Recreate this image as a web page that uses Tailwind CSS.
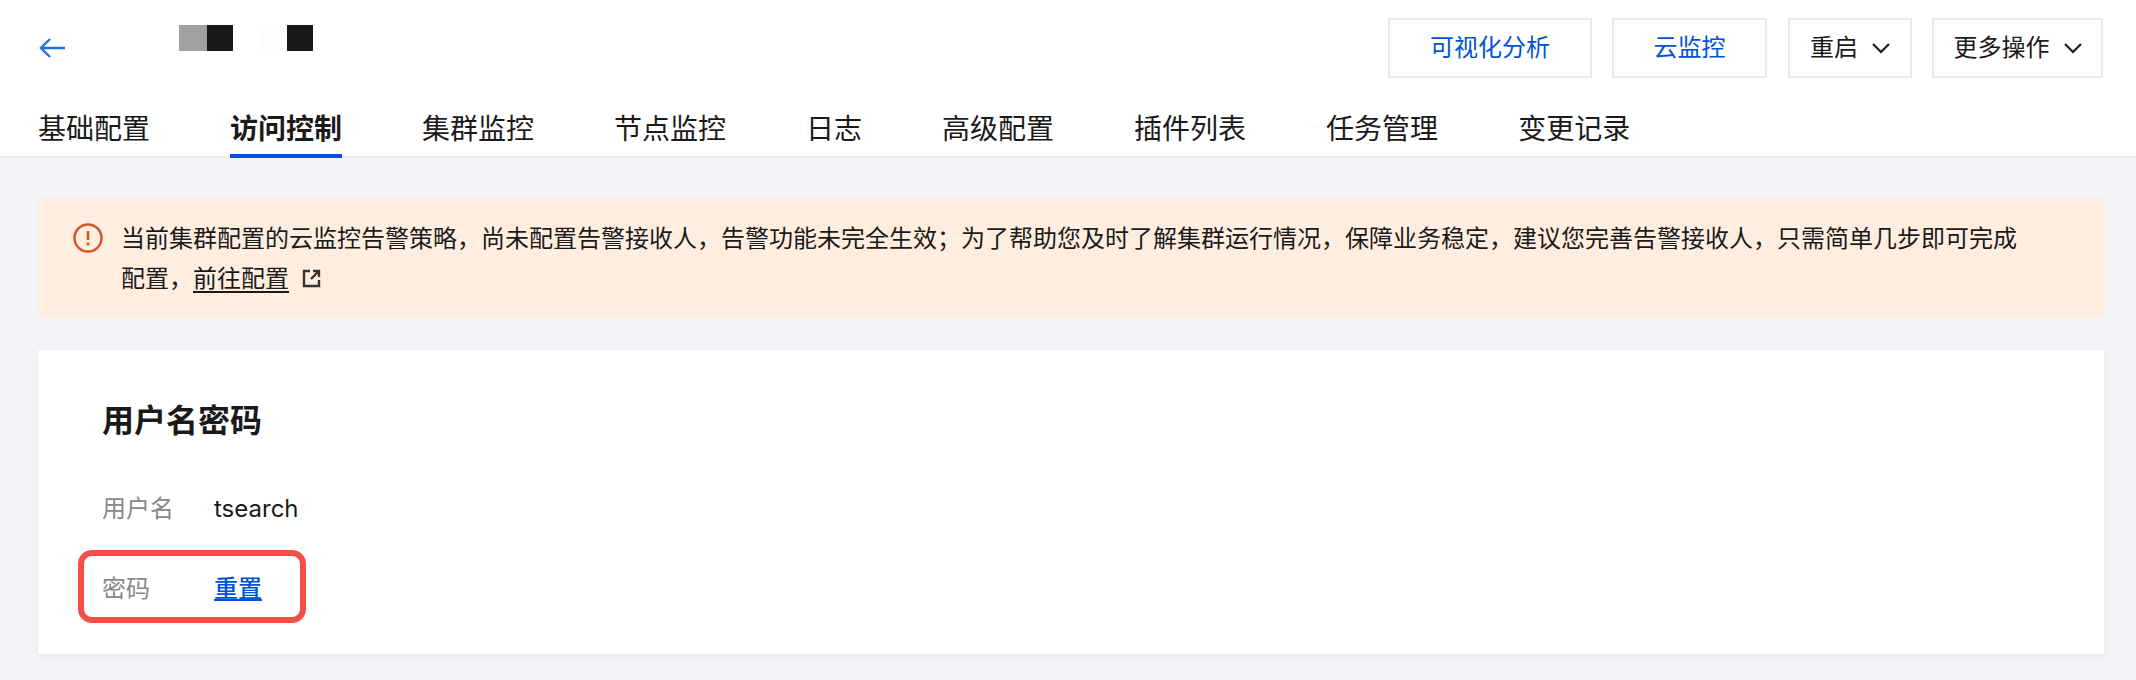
<!DOCTYPE html>
<html lang="zh-CN">
<head>
    <meta charset="UTF-8">
    <title>访问控制</title>
    <script src="https://cdn.jsdelivr.net/npm/@tailwindcss/browser@4"></script>
</head>
<body class="bg-[#f2f4f8] text-[#1a1a1a] font-['Inter','Noto_Sans_CJK_SC',sans-serif] h-[680px] overflow-hidden">

    <!-- header -->
    <header class="relative h-[156px] bg-white shadow-[0_2px_0_#e9ecf2] pl-[38px] pr-[33px]">
        <div class="flex items-start justify-between h-[96px]">
            <div class="flex items-start">
                <svg class="mt-[37px] w-[28px] h-[22px]" viewBox="0 0 28 22" fill="none" stroke="#1f6fe5" stroke-width="2.4">
                    <path d="M27 11H3M12 2l-9 9 9 9"/>
                </svg>
                <!-- blurred-out cluster name -->
                <div class="flex ml-[113px] mt-[25px] h-[26px]">
                    <div class="w-[28px] bg-[#a0a0a0]"></div>
                    <div class="w-[26px] bg-[#181818]"></div>
                    <div class="w-[26px] bg-white"></div>
                    <div class="w-[28px] bg-[#fdfdfd]"></div>
                    <div class="w-[26px] bg-[#181818]"></div>
                </div>
            </div>
            <div class="flex items-center gap-[20px] mt-[18px] text-[24px]">
                <button class="h-[60px] w-[204px] border-2 border-[#e7eaf0] text-[#0052d9]">可视化分析</button>
                <button class="h-[60px] w-[155px] border-2 border-[#e7eaf0] text-[#0052d9]">云监控</button>
                <button class="ml-[1px] h-[60px] w-[124px] border-2 border-[#e7eaf0] flex items-center justify-center gap-[14px]">
                    重启
                    <svg class="w-[18px] h-[12px]" viewBox="0 0 18 12" fill="none" stroke="#1a1a1a" stroke-width="2.2"><path d="M1 2l8 8 8-8"/></svg>
                </button>
                <button class="h-[60px] w-[171px] border-2 border-[#e7eaf0] flex items-center justify-center gap-[14px]">
                    更多操作
                    <svg class="w-[18px] h-[12px]" viewBox="0 0 18 12" fill="none" stroke="#1a1a1a" stroke-width="2.2"><path d="M1 2l8 8 8-8"/></svg>
                </button>
            </div>
        </div>
        <nav class="flex gap-[80px] text-[28px] leading-[40px]">
            <a class="h-[62px] pt-[13px]">基础配置</a>
            <a class="h-[62px] pt-[13px] font-bold border-b-4 border-[#0052d9]">访问控制</a>
            <a class="h-[62px] pt-[13px]">集群监控</a>
            <a class="h-[62px] pt-[13px]">节点监控</a>
            <a class="h-[62px] pt-[13px]">日志</a>
            <a class="h-[62px] pt-[13px]">高级配置</a>
            <a class="h-[62px] pt-[13px]">插件列表</a>
            <a class="h-[62px] pt-[13px]">任务管理</a>
            <a class="h-[62px] pt-[13px]">变更记录</a>
        </nav>
    </header>

    <main class="pl-[38px] pr-[32px] pt-[42px]">
        <!-- alert -->
        <div class="flex h-[120px] bg-[#ffeee0] pl-[35px] pr-[80px] py-[20px] text-[24px] leading-[40px]">
            <svg class="mt-[5px] w-[30px] h-[30px] shrink-0" viewBox="0 0 30 30" fill="none">
                <circle cx="15" cy="15" r="13.5" stroke="#d2552a" stroke-width="2.4"/>
                <path d="M15 8v9" stroke="#d2552a" stroke-width="2.6"/>
                <path d="M15 19.5v3" stroke="#d2552a" stroke-width="2.6"/>
            </svg>
            <p class="ml-[18px] mt-[1px]">
                当前集群配置的云监控告警策略，尚未配置告警接收人，告警功能未完全生效；为了帮助您及时了解集群运行情况，保障业务稳定，建议您完善告警接收人，只需简单几步即可完成配置，<a class="underline underline-offset-4">前往配置</a>
                <svg class="inline-block ml-[6px] mb-[4px] w-[20px] h-[20px]" viewBox="0 0 20 20" fill="none" stroke="#333" stroke-width="2.4">
                    <path d="M8 3H2v15h15v-6M11 3h6v6M17 3L9 11"/>
                </svg>
            </p>
        </div>

        <!-- card -->
        <section class="mt-[32px] h-[304px] bg-white shadow-[0_2px_8px_rgba(0,0,0,0.04)] pl-[64px] pt-[51px]">
            <h2 class="text-[32px] leading-[40px] font-bold">用户名密码</h2>
            <div class="flex mt-[48px] text-[24px] leading-[40px]">
                <span class="w-[112px] text-[#888888]">用户名</span>
                <span>tsearch</span>
            </div>
            <div class="relative flex mt-[40px] text-[24px] leading-[40px]">
                <span class="w-[112px] text-[#888888]">密码</span>
                <a class="text-[#0052d9] font-medium underline underline-offset-2 decoration-2">重置</a>
                <div class="absolute left-[-24px] top-[-19px] w-[228px] h-[73px] border-[6px] border-[#f44f46] rounded-[14px]"></div>
            </div>
        </section>
    </main>
</body>
</html>
